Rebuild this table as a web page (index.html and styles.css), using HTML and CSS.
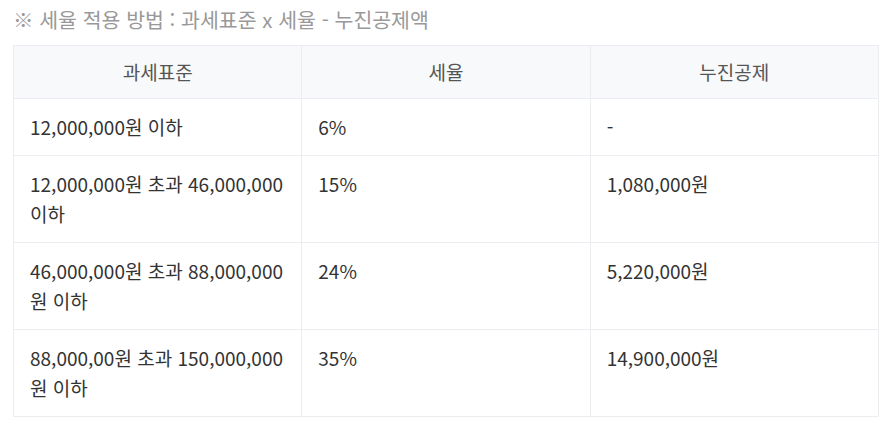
FILE: index.html
```html
<!DOCTYPE html>
<html lang="ko">
<head>
  <meta charset="UTF-8" />
  <title>세율 적용 방법</title>
  <link rel="stylesheet" href="styles.css">
</head>
<body>

  <!-- 안내 문구 -->
  <p class="note">※ 세율 적용 방법 : 과세표준 x 세율 - 누진공제액</p>

  <!-- 세율표 -->
  <table class="tax-table">
    <thead>
      <tr>
        <th>과세표준</th>
        <th>세율</th>
        <th>누진공제</th>
      </tr>
    </thead>
    <tbody>
      <tr>
        <td>12,000,000원 이하</td>
        <td>6%</td>
        <td>-</td>
      </tr>
      <tr>
        <td>12,000,000원 초과 46,000,000 이하</td>
        <td>15%</td>
        <td>1,080,000원</td>
      </tr>
      <tr>
        <td>46,000,000원 초과 88,000,000원 이하</td>
        <td>24%</td>
        <td>5,220,000원</td>
      </tr>
      <tr>
        <td>88,000,00원 초과 150,000,000원 이하</td>
        <td>35%</td>
        <td>14,900,000원</td>
      </tr>
    </tbody>
  </table>

</body>
</html>
```

FILE: styles.css
```css
body {
  font-family: "Noto Sans CJK KR", "Noto Sans", sans-serif;
  margin: 0;
  padding: 6px 13px 0;
  background: #fff;
  color: #333;
}

.note {
  margin: 0 0 13px;
  font-size: 20.5px;
  line-height: 26px;
  color: #999;
}

.tax-table {
  width: 866px;
  border-collapse: collapse;
  table-layout: fixed;
  font-size: 19px;
}

.tax-table th,
.tax-table td {
  border: 1px solid #ebedf0;
  padding: 13px 16px;
  line-height: 30px;
  text-align: left;
  vertical-align: top;
}

.tax-table th {
  background: #f8f9fa;
  color: #555;
  font-weight: normal;
  text-align: center;
  padding: 11px 16px;
}
```
